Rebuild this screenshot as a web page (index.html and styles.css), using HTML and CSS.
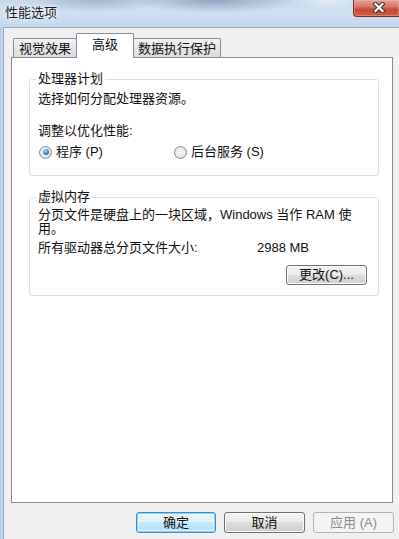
FILE: index.html
```html
<!DOCTYPE html>
<html lang="zh-CN">
<head>
<meta charset="UTF-8">
<meta name="viewport" content="width=device-width, initial-scale=1.0">
<title>性能选项</title>
<link rel="stylesheet" href="styles.css">
</head>
<body>

<div class="titlebar">
  <span class="title">性能选项</span>
  <div class="close">
    <svg width="14" height="11" viewBox="0 0 14 11">
      <path d="M3.5 2 L10.5 9 M10.5 2 L3.5 9" stroke="#3c3c3c" stroke-width="4.4" stroke-linecap="square" fill="none"/>
      <path d="M3.5 2 L10.5 9 M10.5 2 L3.5 9" stroke="#ffffff" stroke-width="2.2" stroke-linecap="square" fill="none"/>
    </svg>
  </div>
</div>

<div class="client">
  <div class="tabs">
    <div class="tab tab-visual">视觉效果</div>
    <div class="tab tab-advanced active">高级</div>
    <div class="tab tab-dep">数据执行保护</div>
  </div>

  <div class="panel">
    <div class="group group-cpu">
      <div class="group-title">处理器计划</div>
      <p class="line first">选择如何分配处理器资源。</p>
      <p class="line label">调整以优化性能:</p>
      <div class="radios">
        <label class="radio-item program"><span class="radio checked"></span>程序 (P)</label>
        <label class="radio-item"><span class="radio"></span>后台服务 (S)</label>
      </div>
    </div>

    <div class="group group-vm">
      <div class="group-title">虚拟内存</div>
      <p class="para">分页文件是硬盘上的一块区域，Windows 当作 RAM 使<br>用。</p>
      <div class="size-row">
        <span class="size-label">所有驱动器总分页文件大小:</span>
        <span class="size-value">2988 MB</span>
      </div>
      <div class="change-row">
        <button class="btn change">更改(C)...</button>
      </div>
    </div>
  </div>

  <div class="buttons">
    <button class="btn default ok">确定</button>
    <button class="btn cancel">取消</button>
    <button class="btn disabled apply">应用 (A)</button>
  </div>
</div>

</body>
</html>
```

FILE: styles.css
```css
html, body {
  margin: 0;
  padding: 0;
}
body {
  width: 399px;
  height: 539px;
  overflow: hidden;
  font-family: "Liberation Sans", "Noto Sans CJK SC", sans-serif;
  font-size: 13px;
  color: #111;
  background: linear-gradient(to right, #b4cde8 0, #c4d9ef 3px);
}
.titlebar {
  height: 27px;
  display: flex;
  align-items: flex-start;
  background:
    radial-gradient(ellipse 70px 12px at 95px 0, rgba(120, 140, 168, 0.45), transparent),
    radial-gradient(ellipse 80px 13px at 215px 0, rgba(100, 122, 152, 0.55), transparent),
    radial-gradient(ellipse 40px 10px at 330px 0, rgba(255, 255, 255, 0.5), transparent),
    linear-gradient(#c6d8ec, #cfe0f2 45%, #c4d8ee);
}
.title {
  margin: 5px 0 0 5px;
  line-height: 16px;
  color: #1a1a1a;
  text-shadow: 0 0 6px #fff, 0 0 3px #fff;
}
.close {
  margin-left: auto;
  width: 46px;
  height: 17px;
  box-sizing: border-box;
  padding: 2px 0 0 4px;
  display: flex;
  justify-content: center;
  align-items: flex-start;
  border: 1px solid #7a2e24;
  border-top: none;
  border-right: none;
  border-radius: 0 0 0 4px;
  background: linear-gradient(#e2a096, #d7786a 40%, #c64a34 60%, #d05c3e);
  box-shadow: inset 0 0 0 1px rgba(255, 200, 190, 0.35);
}
.close svg {
  display: block;
}
.client {
  margin-left: 3px;
  height: 512px;
  border-top: 1px solid #98a9be;
  border-left: 1px solid #98a9be;
  background: #f0f0f0;
  padding: 5px 5px 0 7px;
}
.tabs {
  display: flex;
  align-items: flex-end;
  height: 24px;
  margin-left: 2px;
}
.tab {
  box-sizing: border-box;
  height: 19px;
  line-height: 17px;
  padding-top: 1px;
  text-align: center;
  border: 1px solid #898c95;
  border-bottom: none;
  border-radius: 2px 2px 0 0;
  background: linear-gradient(#f3f3f3, #e6e6e6 50%, #dcdcdc);
}
.tab-visual {
  width: 64px;
  margin-right: -1px;
}
.tab-advanced {
  width: 58px;
}
.tab-dep {
  width: 88px;
  margin-left: -1px;
}
.tab.active {
  height: 25px;
  margin-bottom: -1px;
  line-height: 22px;
  padding-top: 0;
  background: #fff;
  position: relative;
  z-index: 1;
}
.panel {
  box-sizing: border-box;
  width: 382px;
  height: 446px;
  border: 1px solid #898c95;
  background: #fff;
  padding-top: 21px;
}
.group {
  margin: 0 13px 0 17px;
  padding: 0 0 0 8px;
  border: 1px solid #d5dfe5;
  border-radius: 3px;
}
.group-vm {
  margin-top: 21px;
  padding-bottom: 10px;
}
.group-cpu {
  padding-bottom: 16px;
}
.group-title {
  width: fit-content;
  margin: -8px 0 0 -2px;
  padding: 0 2px;
  line-height: 14px;
  background: #fff;
}
.line {
  margin: 0;
  line-height: 14px;
}
.line.first {
  margin-top: 6px;
}
.line.label {
  margin-top: 18px;
}
.radios {
  display: flex;
  margin-top: 7px;
  line-height: 14px;
}
.radio-item {
  display: flex;
  align-items: center;
}
.radio-item.program {
  width: 135px;
  margin-left: 1px;
}
.radio {
  box-sizing: border-box;
  width: 13px;
  height: 13px;
  margin-right: 4px;
  border-radius: 50%;
  border: 1px solid #8a8a8a;
  background: radial-gradient(circle at 45% 40%, #fbfbfb, #e4e4e4 60%, #cfcfcf);
  display: flex;
  align-items: center;
  justify-content: center;
}
.radio.checked::after {
  content: '';
  width: 6px;
  height: 6px;
  border-radius: 50%;
  background: radial-gradient(circle at 40% 35%, #a8dcf8, #2d87cc 55%, #125a9c);
}
.para {
  margin: 4px 0 0;
  line-height: 14px;
}
.size-row {
  display: flex;
  margin-top: 5px;
  line-height: 14px;
}
.size-label {
  width: 219px;
}
.change-row {
  display: flex;
  justify-content: flex-end;
  margin: 10px 11px 0 0;
}
.btn {
  box-sizing: border-box;
  height: 21px;
  padding: 0;
  font-family: inherit;
  font-size: 13px;
  line-height: 18px;
  color: #111;
  border: 1px solid #707070;
  border-radius: 3px;
  background: linear-gradient(#f2f2f2, #ebebeb 50%, #dddddd 50%, #cfcfcf);
  box-shadow: inset 0 0 0 1px #fbfbfb;
}
.btn.change {
  width: 81px;
  height: 20px;
}
.btn.default {
  border-color: #3c8ccc;
  background: linear-gradient(#e8f5fd, #dcf0fc 50%, #c6e7fa 50%, #b3ddf5);
  box-shadow: inset 0 0 0 1px #8fd0f5, inset 0 0 2px 2px rgba(255, 255, 255, 0.6);
}
.btn.disabled {
  color: #8a8a8a;
  border-color: #adb2b5;
  background: #f4f4f4;
  box-shadow: none;
}
.buttons {
  display: flex;
  justify-content: flex-end;
  gap: 8px;
  margin-top: 9px;
}
.ok {
  width: 80px;
}
.cancel, .apply {
  width: 81px;
}
```
